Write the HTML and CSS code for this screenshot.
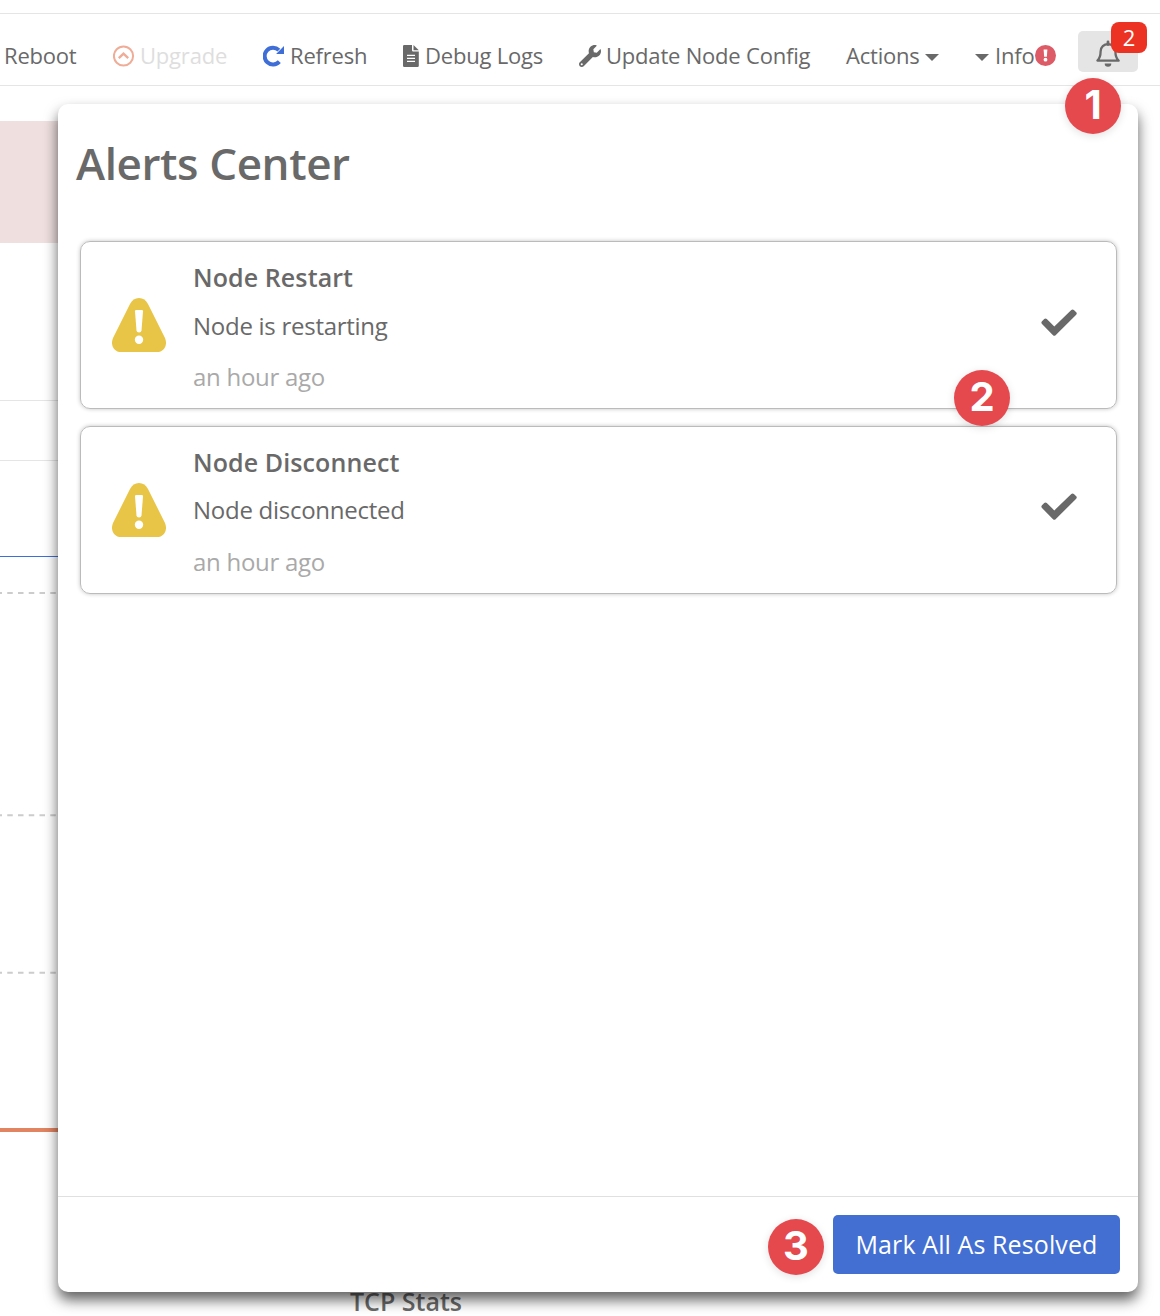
FILE: index.html
```html
<!DOCTYPE html>
<html lang="en">
<head>
<meta charset="utf-8">
<title>Alerts Center</title>
<link rel="stylesheet" href="styles.css">
</head>
<body>
<div class="page">
  <header class="toolbar">
    <span class="item">Reboot</span>
    <span class="item disabled">
      <svg class="icon-up" width="22" height="22" viewBox="0 0 22 22" fill="none" stroke="#efad98"><circle cx="10.500" cy="11" r="9.600" stroke-width="2"/><path d="M5.800 13.200 10.500 8.700l4.700 4.500" stroke-width="2.400"/></svg>
      <span>Upgrade</span>
    </span>
    <span class="item">
      <svg class="icon-refresh" width="22" height="22" viewBox="0 0 22 22"><path d="M16.300 16.700A8.400 8.400 0 1 1 15.900 5.100" fill="none" stroke="#3f6fd6" stroke-width="4"/><path d="M21 1v7.900h-7.900z" fill="#3f6fd6"/></svg>
      <span>Refresh</span>
    </span>
    <span class="item">
      <svg class="icon-file" width="17" height="22" viewBox="0 0 17 22"><path d="M2.200 0H10v5.200Q10 6.500 11.200 6.500H16.800V20.800Q16.800 22 15.600 22H2.200Q1 22 1 20.800V1.200Q1 0 2.200 0z" fill="#696969"/><path d="M11.500 0 16.800 5.300H11.500z" fill="#696969"/><path d="M5 10.300h8M5 13.300h8M5 16.300h8" stroke="#fff" stroke-width="1.300"/></svg>
      <span>Debug Logs</span>
    </span>
    <span class="item">
      <svg class="icon-wrench" width="22" height="22" viewBox="0 0 512 512"><path fill="#696969" fill-rule="evenodd" d="M507.700 109.100c-2.200-9-13.500-12.100-20.100-5.500l-74.400 74.400-67.900-11.300L334 98.900l74.400-74.400c6.600-6.600 3.400-17.900-5.700-20.200-47.400-11.700-99.600.9-136.600 37.900-39.600 39.600-50.600 97.100-34.100 147.200L18.700 402.800c-25 25-25 65.500 0 90.500s65.500 25 90.500 0l213.200-213.200c50.100 16.700 107.500 5.700 147.400-34.200 37.100-37.100 49.700-89.300 37.900-136.800zM64 472a24 24 0 1 1 0-48 24 24 0 0 1 0 48z"/></svg>
      <span>Update Node Config</span>
    </span>
    <span class="item"><span>Actions</span><i class="caret after"></i></span>
    <span class="item"><i class="caret before"></i><span>Info</span>
      <svg class="icon-info" width="21" height="21" viewBox="0 0 20 20"><circle cx="10" cy="10" r="10" fill="#dc5b66"/><path d="M8.200 4.200h3.600l-.5 7H8.700z" fill="#fff"/><circle cx="10" cy="14" r="1.800" fill="#fff"/></svg>
    </span>
    <span class="bell">
      <svg width="24" height="28" viewBox="0 0 24 28"><path d="M1.400 20.600C4.200 18 4.600 15.500 4.600 11.500C4.600 7 8 4.200 12 4.200S19.400 7 19.400 11.500C19.400 15.500 19.800 18 22.600 20.600Z" fill="none" stroke="#696969" stroke-width="2.300" stroke-linejoin="round"/><path d="M12 2v2.500" stroke="#696969" stroke-width="2.800" stroke-linecap="round"/><path d="M8.700 23.500h6.600a3.300 3.200 0 0 1-6.600 0z" fill="#696969"/></svg>
      <span class="count">2</span>
    </span>
  </header>
  <main class="backdrop">
    <div class="banner"></div>
    <div class="row-a"></div>
    <div class="row-b"></div>
    <svg class="chart" width="100" height="820" viewBox="0 0 100 820" fill="none"><path d="M0 95.500h100" stroke="#3f6fd6" stroke-width="1.200"/><path d="M-3.500 132h104M-3.500 354.300h104M-3.500 511.700h104" stroke="#ccc" stroke-width="2" stroke-dasharray="5.500 5.250"/><path d="M0 669h100" stroke="#e08462" stroke-width="4"/></svg>
    <h3 class="stats">TCP Stats</h3>
  </main>
  <section class="panel">
    <h1>Alerts Center</h1>
    <div class="alerts">
      <article class="alert">
        <svg class="warn" width="54" height="54" viewBox="0 0 54 54"><path d="M27 0C31 0 34 2 36 6L53 40C56 47 52 54 45 54H9C2 54-2 47 1 40L18 6C20 2 23 0 27 0Z" fill="#e8c547"/><path d="M24.200 12h5.600q1.300 0 1.200 1.300L29.500 32.500q-.2 2-2.500 2t-2.500-2L23 13.300Q22.900 12 24.200 12z" fill="#fff"/><circle cx="27" cy="41.800" r="4.200" fill="#fff"/></svg>
        <div class="body"><h2>Node Restart</h2><p>Node is restarting</p><time>an hour ago</time></div>
        <svg class="check" width="36" height="28" viewBox="0 0 36 28"><path d="M1 12.200 3.200 10Q4.500 8.900 5.800 10L13.300 17.400 30.300 1Q31.600 0 32.900 1L35.200 3.300Q36.300 4.500 35.200 5.700L14.600 26.300Q13.300 27.400 12 26.300L1 15Q-.3 13.600 1 12.200Z" fill="#696969"/></svg>
      </article>
      <article class="alert">
        <svg class="warn" width="54" height="54" viewBox="0 0 54 54"><path d="M27 0C31 0 34 2 36 6L53 40C56 47 52 54 45 54H9C2 54-2 47 1 40L18 6C20 2 23 0 27 0Z" fill="#e8c547"/><path d="M24.200 12h5.600q1.300 0 1.200 1.300L29.500 32.500q-.2 2-2.500 2t-2.500-2L23 13.300Q22.900 12 24.200 12z" fill="#fff"/><circle cx="27" cy="41.800" r="4.200" fill="#fff"/></svg>
        <div class="body"><h2>Node Disconnect</h2><p>Node disconnected</p><time>an hour ago</time></div>
        <svg class="check" width="36" height="28" viewBox="0 0 36 28"><path d="M1 12.200 3.200 10Q4.500 8.900 5.800 10L13.300 17.400 30.300 1Q31.600 0 32.900 1L35.200 3.300Q36.300 4.500 35.200 5.700L14.600 26.300Q13.300 27.400 12 26.300L1 15Q-.3 13.600 1 12.200Z" fill="#696969"/></svg>
      </article>
    </div>
    <footer><button>Mark All As Resolved</button></footer>
  </section>
  <span class="step one">1</span>
  <span class="step two">2</span>
  <span class="step three">3</span>
</div>
</body>
</html>
```
FILE: styles.css
```css
* { box-sizing: border-box; }
body { margin: 0; background: #fff; color: #696969; font-family: "Open Sans", "Noto Sans", sans-serif; }
h1, h2, h3, p { margin: 0; }
svg { display: block; flex: none; }
.page { position: relative; display: flow-root; width: 1160px; height: 1316px; overflow: hidden; }

.toolbar {
  display: grid;
  grid-template-columns: 109px 150px 139px 177px 267px 129px 103px 60px;
  align-items: center;
  height: 73px;
  margin-top: 13px;
  padding-left: 4px;
  border-top: 1px solid #e5e5e5;
  border-bottom: 1px solid #e5e5e5;
  font-size: 22px;
  line-height: 30px;
  letter-spacing: -.2px;
}
.item { display: flex; align-items: center; white-space: nowrap; height: 73px; padding: 9px 0 1px; }
.item svg { margin-top: 2px; }
.disabled { color: #dedede; }
.icon-up, .icon-refresh { margin-right: 5px; }
.icon-file { margin-right: 6px; }
.icon-wrench { margin-right: 5px; }
.caret { border: 7px solid transparent; border-top-color: #696969; border-bottom: 0; margin-top: 6px; }
.after { margin-left: 5px; }
.before { margin-right: 6px; }
.icon-info { margin-left: 1px; }
.bell { position: relative; display: flex; align-items: center; justify-content: center; height: 41px; margin-top: 2px; background: #e5e5e5; border-radius: 5px; }
.bell svg { margin-top: 5px; }
.count { position: absolute; left: 33px; top: -9px; width: 36px; height: 31px; border-radius: 8px; background: #ec3323; color: #fff; text-align: center; line-height: 30px; }

.backdrop { width: 1100px; padding-top: 35px; }
.banner { height: 122px; background: #efdfdf; }
.row-a { height: 158px; border-bottom: 1px solid #e5e5e5; }
.row-b { height: 60px; border-bottom: 1px solid #e5e5e5; }
.stats { margin-left: 350px; padding-top: 3px; font-size: 25px; line-height: 34px; font-weight: 600; }

.panel {
  position: absolute; left: 58px; top: 104px; width: 1080px; height: 1188px;
  display: flex; flex-direction: column;
  background: #fff; border-radius: 10px;
  box-shadow: 0 8px 14px rgba(0, 0, 0, .62);
}
.panel h1 { padding: 29px 18px 1px; font-size: 44px; line-height: 60px; font-weight: 600; letter-spacing: -.4px; }
.alerts { flex: 1; display: flex; flex-direction: column; gap: 16.500px; padding: 47px 21px 0 22px; }
.alert { display: flex; align-items: center; height: 168px; padding: 0 39px 0 31px; border: 1px solid #bbb; border-radius: 10px; box-shadow: 0 0 4px rgba(0, 0, 0, .24); }
.warn { margin-right: 27px; }
.body { flex: 1; align-self: flex-start; padding-top: 18.250px; }
.body h2 { font-size: 25px; line-height: 34px; font-weight: 600; letter-spacing: .1px; }
.body p { margin-top: 14.400px; font-size: 24px; line-height: 33px; letter-spacing: -.27px; }
.body time { display: block; margin-top: 18.600px; font-size: 24px; line-height: 33px; color: #a9a9a9; letter-spacing: -.27px; }
.check { margin-top: -5px; }
.panel footer { display: flex; justify-content: flex-end; height: 96px; padding: 18px; border-top: 1px solid #e0e0e0; }
button { width: 287px; height: 59px; padding: 0 0 2px; border: 0; border-radius: 5px; background: #436fd3; color: #fff; font: 25px/34px "Open Sans", "Noto Sans", sans-serif; letter-spacing: .1px; }

.step { position: absolute; width: 56px; height: 56px; border-radius: 50%; background: #e5484d; color: #fff; font: 700 40px/54px Inter, sans-serif; text-align: center; box-shadow: 0 2px 8px rgba(0, 0, 0, .12); }
.one { left: 1065px; top: 78px; }
.two { left: 954px; top: 370px; }
.three { left: 768px; top: 1219px; }
```
